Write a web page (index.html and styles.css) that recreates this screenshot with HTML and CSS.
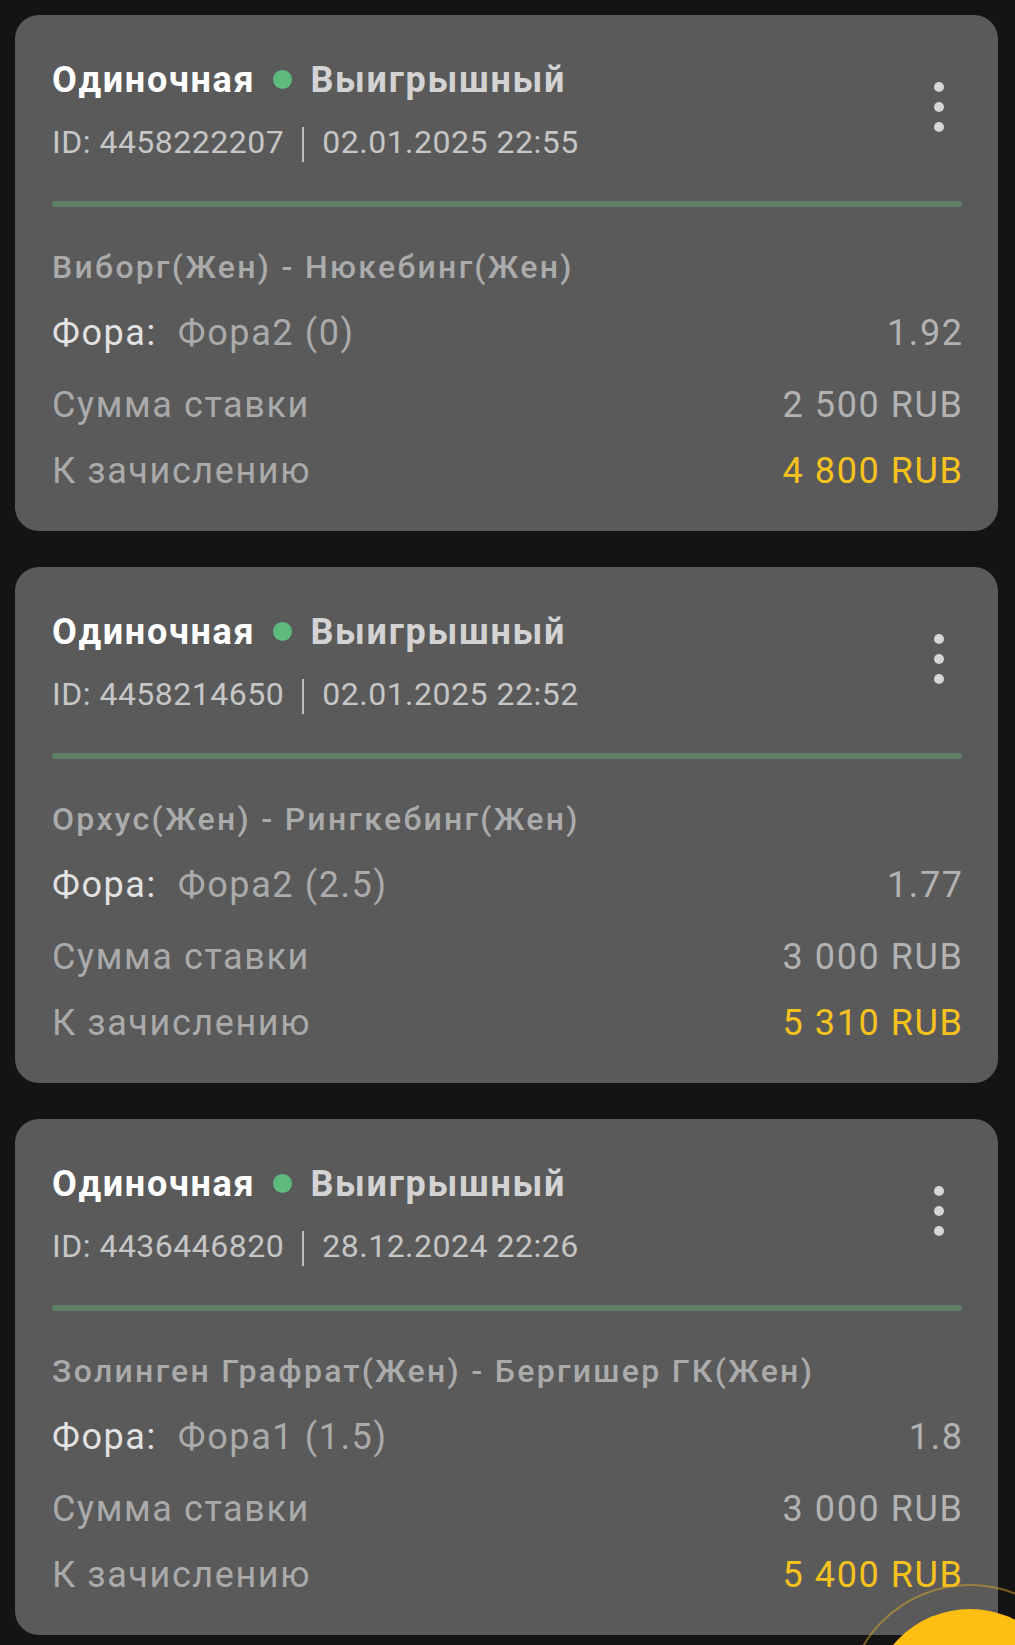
FILE: index.html
```html
<!DOCTYPE html>
<html lang="ru">
<head>
<meta charset="utf-8">
<title>Ставки</title>
<link rel="stylesheet" href="styles.css">
</head>
<body>
<div class="list">
  <div class="card">
    <div class="head">
      <div class="head-main">
        <div class="title"><span class="type">Одиночная</span><span class="dot"></span><span class="status">Выигрышный</span></div>
        <div class="meta"><span>ID: 4458222207</span><span class="sep"></span><span>02.01.2025 22:55</span></div>
      </div>
      <div class="kebab"><i></i><i></i><i></i></div>
    </div>
    <div class="progress"></div>
    <div class="match">Виборг(Жен) - Нюкебинг(Жен)</div>
    <div class="row market-row"><span class="label">Фора:</span><span class="market">Фора2 (0)</span><span class="value">1.92</span></div>
    <div class="row stake-row"><span>Сумма ставки</span><span class="value">2 500 RUB</span></div>
    <div class="row payout-row"><span>К зачислению</span><span class="value win">4 800 RUB</span></div>
  </div>

  <div class="card">
    <div class="head">
      <div class="head-main">
        <div class="title"><span class="type">Одиночная</span><span class="dot"></span><span class="status">Выигрышный</span></div>
        <div class="meta"><span>ID: 4458214650</span><span class="sep"></span><span>02.01.2025 22:52</span></div>
      </div>
      <div class="kebab"><i></i><i></i><i></i></div>
    </div>
    <div class="progress"></div>
    <div class="match">Орхус(Жен) - Рингкебинг(Жен)</div>
    <div class="row market-row"><span class="label">Фора:</span><span class="market">Фора2 (2.5)</span><span class="value">1.77</span></div>
    <div class="row stake-row"><span>Сумма ставки</span><span class="value">3 000 RUB</span></div>
    <div class="row payout-row"><span>К зачислению</span><span class="value win">5 310 RUB</span></div>
  </div>

  <div class="card">
    <div class="head">
      <div class="head-main">
        <div class="title"><span class="type">Одиночная</span><span class="dot"></span><span class="status">Выигрышный</span></div>
        <div class="meta"><span>ID: 4436446820</span><span class="sep"></span><span>28.12.2024 22:26</span></div>
      </div>
      <div class="kebab"><i></i><i></i><i></i></div>
    </div>
    <div class="progress"></div>
    <div class="match">Золинген Графрат(Жен) - Бергишер ГК(Жен)</div>
    <div class="row market-row"><span class="label">Фора:</span><span class="market">Фора1 (1.5)</span><span class="value">1.8</span></div>
    <div class="row stake-row"><span>Сумма ставки</span><span class="value">3 000 RUB</span></div>
    <div class="row payout-row"><span>К зачислению</span><span class="value win">5 400 RUB</span></div>
  </div>
</div>
<div class="fab-ring"></div>
<div class="fab"></div>
</body>
</html>
```
FILE: styles.css
```css
html, body {
  margin: 0;
  padding: 0;
  height: 100%;
  overflow: hidden;
}
body {
  background: #141414;
  font-family: Roboto, "Noto Sans", "Liberation Sans", sans-serif;
  color: #aaaaaa;
}
.list {
  display: flex;
  flex-direction: column;
  gap: 36px;
  padding: 15px 17px 0 15px;
}
.card {
  background: #5a5a5a;
  border-radius: 24px;
  padding: 43px 36px 38px 37px;
  display: flex;
  flex-direction: column;
}
.head {
  display: flex;
  align-items: flex-start;
}
.head-main {
  flex: 1;
}
.title {
  font-size: 36px;
  line-height: 44px;
  font-weight: 700;
  letter-spacing: 1.7px;
  white-space: nowrap;
}
.type {
  color: #ffffff;
}
.status {
  color: #d3d3d3;
}
.dot {
  display: inline-block;
  width: 19px;
  height: 19px;
  border-radius: 50%;
  background: #5fba7d;
  margin: 0 18px 0 18px;
  vertical-align: 3px;
}
.meta {
  margin-top: 20px;
  font-size: 32px;
  line-height: 40px;
  letter-spacing: 0.5px;
  color: #c6c6c6;
  white-space: nowrap;
}
.sep {
  display: inline-block;
  width: 2px;
  height: 35px;
  background: #bdbdbd;
  margin: 0 18px 0 18px;
  vertical-align: -9px;
}
.kebab {
  display: flex;
  flex-direction: column;
  gap: 10px;
  margin: 24px 18px 0 0;
}
.kebab i {
  display: block;
  width: 10px;
  height: 10px;
  border-radius: 50%;
  background: #d6d6d6;
}
.progress {
  margin-top: 39px;
  height: 6px;
  border-radius: 3px;
  background: #617e68;
}
.match {
  margin-top: 40px;
  font-size: 32px;
  line-height: 40px;
  font-weight: 500;
  letter-spacing: 2.3px;
  color: #ababab;
  white-space: nowrap;
}
.row {
  display: flex;
  align-items: baseline;
  font-size: 36px;
  line-height: 44px;
  letter-spacing: 1.6px;
  white-space: nowrap;
}
.market-row { margin-top: 24px; }
.stake-row { margin-top: 28px; }
.payout-row { margin-top: 22px; }
.label {
  color: #e2e2e2;
}
.market {
  margin-left: 21px;
  color: #ababab;
}
.value {
  margin-left: auto;
  margin-right: -1.6px;
  color: #b2b2b2;
}
.value.win {
  color: #f6c21d;
}
.fab {
  position: fixed;
  left: 870px;
  top: 1609px;
  width: 200px;
  height: 200px;
  border-radius: 50%;
  background: #ffbf12;
}
.fab-ring {
  position: fixed;
  left: 845px;
  top: 1584px;
  width: 246px;
  height: 246px;
  border-radius: 50%;
  border: 2px solid rgba(220, 170, 40, 0.5);
}
```
